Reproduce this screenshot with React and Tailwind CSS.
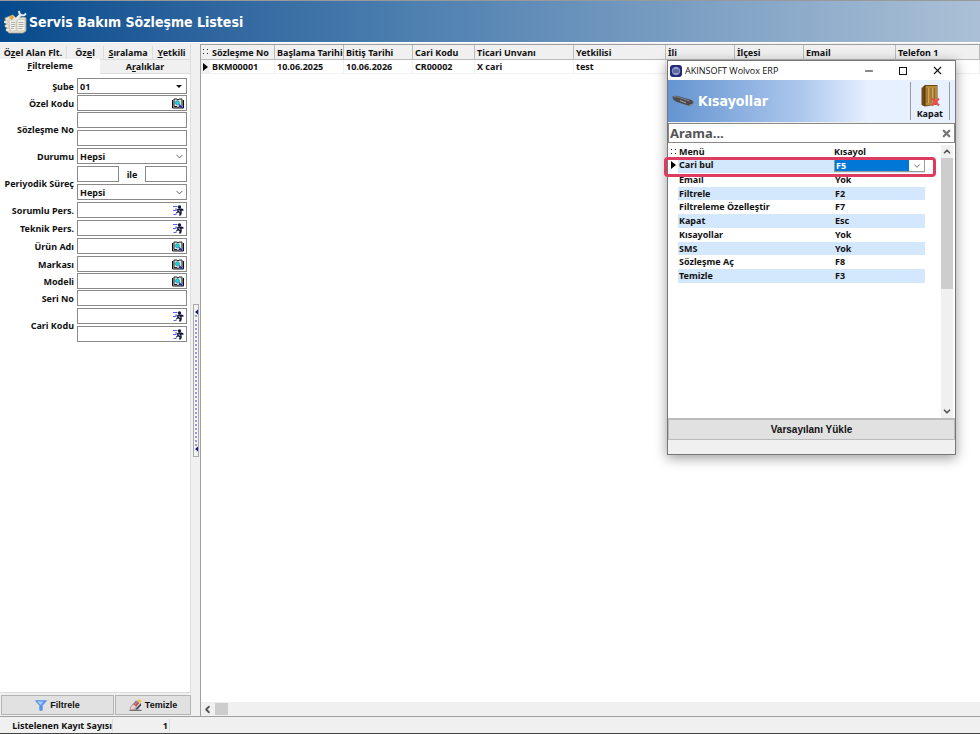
import { ChevronDown, ChevronLeft, ChevronUp, Minus, X } from 'lucide-react';

const columns = [
  { title: 'Sözleşme No', value: 'BKM00001', width: 'w-[65px]' },
  { title: 'Başlama Tarihi', value: '10.06.2025', width: 'w-[69px]' },
  { title: 'Bitiş Tarihi', value: '10.06.2026', width: 'w-[69px]' },
  { title: 'Cari Kodu', value: 'CR00002', width: 'w-[62px]' },
  { title: 'Ticari Unvanı', value: 'X cari', width: 'w-[99px]' },
  { title: 'Yetkilisi', value: 'test', width: 'w-[92px]' },
  { title: 'İli', value: '', width: 'w-[69px]' },
  { title: 'İlçesi', value: '', width: 'w-[69px]' },
  { title: 'Email', value: '', width: 'w-[92px]' },
  { title: 'Telefon 1', value: '', width: '' },
];

const shortcuts = [
  ['Cari bul', 'F5'],
  ['Email', 'Yok'],
  ['Filtrele', 'F2'],
  ['Filtreleme Özelleştir', 'F7'],
  ['Kapat', 'Esc'],
  ['Kısayollar', 'Yok'],
  ['SMS', 'Yok'],
  ['Sözleşme Aç', 'F8'],
  ['Temizle', 'F3'],
];

const BookIcon = () => (
  <svg viewBox="0 0 12 11" className="h-[11px] w-3">
    <path d="M0.5 2v8h11V2" fill="#c4c4c4" stroke="#111" />
    <path d="M2 1h3l1 1 1-1h3v7.500H7l-1 1-1-1H2z" fill="#dfe4e4" stroke="#222" />
    <circle cx="5.400" cy="4.800" r="2" fill="#19d8dc" stroke="#067f90" strokeWidth="0.6" />
    <path d="M7 6.500l3.500 3.500" stroke="#2430c8" strokeWidth="1.3" />
  </svg>
);

const RunnerIcon = () => (
  <svg viewBox="0 0 12 11" className="h-[11px] w-3">
    <path d="M1 1.500h4.500M3 4h2M1 5.500h3.500M1.500 9.500h3" stroke="#5a63f0" strokeWidth="1" />
    <circle cx="7.500" cy="2" r="1.700" fill="#14183a" />
    <path d="M4.500 4.500l2.500-1h3l1.500 1v1.200H9.500l0.300 2.300L9 10.500H7l0.500-2.500L6 7.500 4.500 8.500H3.500L5.500 6z" fill="#14183a" />
    <path d="M6.800 5l1.200 1.800" stroke="#e8e8ff" strokeWidth="0.9" />
  </svg>
);

const ContractIcon = () => (
  <svg viewBox="0 0 24 24" className="h-6 w-6">
    <path d="M1 8l8-3 3 3 8-1 2 1v13l-3 2H5l-2-2z" fill="#e8e4d8" stroke="#a79f8c" strokeWidth="0.8" />
    <path d="M5 10h7v11H6zM13 10l8-1v12h-8z" fill="#f4f2ea" stroke="#b6b0a0" strokeWidth="0.6" />
    <path d="M7 12.5h4M7 14.5h4M7 16.5h4M7 18.5h3M14.5 12.5h5M14.5 14.5h5M14.5 16.5h5M14.5 18.5h4" stroke="#9a9a9a" strokeWidth="0.8" />
    <path d="M0 11h4v2H0zM1 15h4v2H1zM2 19h4v2H2z" fill="#fff" stroke="#a79f8c" strokeWidth="0.5" />
    <path d="M10 11l7-6.500" stroke="#e2e9ef" strokeWidth="2.6" />
    <path d="M15 0.800l0.500 3 2 1.500 3-0.300 1.500-1.500" fill="none" stroke="#dfe9f2" strokeWidth="2" />
    <path d="M5 8l3-3 2 2-2 3z" fill="#e5a43a" />
  </svg>
);

const KnifeIcon = () => (
  <svg viewBox="0 0 22 12" className="h-3 w-[22px]">
    <path d="M0.500 1.500q3-1.500 7 0l12 3.500q2.500 1.500 1.500 4-2 2.500-5 1.500L5 7Q0.500 5 0.500 1.500z" fill="#4b4b4f" />
    <path d="M1.500 1.800q3-0.500 6 0.700l10 3.500" fill="none" stroke="#85858a" strokeWidth="1" />
    <path d="M8 5.500l6 2.300" stroke="#a5a5a9" strokeWidth="1" />
    <path d="M17 10.300l4-1.300" stroke="#a9876d" strokeWidth="1" />
  </svg>
);

const DoorIcon = () => (
  <svg viewBox="0 0 20 24" className="h-6 w-5">
    <path d="M1.500 4l3.500-3h12.500v19.500L5 22.500l-3.500-1.500z" fill="#6d4a12" />
    <path d="M5 2h12v18L5 21.500z" fill="#b5893c" />
    <path d="M7 4v15M11 4v14.500M14.500 4v14.500" stroke="#93692a" strokeWidth="1" />
    <path d="M8.500 4v15M12.500 4v14" stroke="#d3ab5e" strokeWidth="0.8" />
    <path d="M5 1.500v20.500" stroke="#4d330b" />
    <path d="M12 14.500l7 7M19 14.500l-7 7" stroke="#ee4a52" strokeWidth="2.200" />
  </svg>
);

const AppIcon = () => (
  <svg viewBox="0 0 12 12" className="h-3 w-3">
    <rect width="12" height="12" rx="3" fill="#202a78" />
    <circle cx="6" cy="6" r="3.800" fill="none" stroke="#b9c0ea" strokeWidth="0.800" />
    <path d="M3 5h6M3 7h6M4 3.600h4M4 8.600h4" stroke="#dfe3f8" strokeWidth="0.700" />
  </svg>
);

const FunnelIcon = () => (
  <svg viewBox="0 0 12 11" className="h-[11px] w-3">
    <path d="M0.500 0.700h11L7.200 5.500v4.800H4.800V5.500z" fill="#5b9bf3" stroke="#3f7fe0" strokeWidth="0.700" />
    <path d="M2.300 1.600h6L5.600 5z" fill="#a9cdfb" />
  </svg>
);

const EraserIcon = () => (
  <svg viewBox="0 0 13 12" className="h-3 w-[13px]">
    <path d="M0.500 11.300h12" stroke="#444" strokeWidth="0.9" />
    <path d="M1 9l3-4 3.500 2.500L5 10.800H2z" fill="#ecd0cc" stroke="#8a6a6a" strokeWidth="0.6" />
    <path d="M4 5l3-3.500L10.500 4l-3 3.500z" fill="#d8503f" />
    <path d="M5.500 5.500L9 2" stroke="#6ea0d8" strokeWidth="1.2" />
    <path d="M8.500 1.500l2-1.500 2 1.500-1 2.500z" fill="#f0c544" />
    <path d="M6 10.500L12 4v2.500l-3.500 4z" fill="#3d4652" />
  </svg>
);

const FieldRow = ({ label, htmlFor, children }) => (
  <div className="flex items-center gap-[3px]">
    <label htmlFor={htmlFor} className="w-[74px] shrink-0 text-right whitespace-nowrap">
      {label}
    </label>
    <div className="flex min-w-0 flex-1 flex-col gap-0.5">{children}</div>
  </div>
);

const TextField = ({ id, label, icon }) => (
  <div className="flex h-4 w-full min-w-0 items-center border border-[#8a8a8a] bg-white">
    <input id={id} aria-label={label} type="text" className="h-full w-full min-w-0 px-0.5 outline-none" />
    {icon && (
      <button type="button" aria-label="Seç" className="shrink-0 pr-0.5">
        {icon === 'book' ? <BookIcon /> : <RunnerIcon />}
      </button>
    )}
  </div>
);

const SelectField = ({ id, label, value, solid }) => (
  <div className="relative h-4 border border-[#8a8a8a] bg-white">
    <select id={id} aria-label={label} className="block h-full w-full appearance-none px-0.5 outline-none">
      <option>{value}</option>
    </select>
    {solid ? (
      <svg viewBox="0 0 6 3" className="pointer-events-none absolute top-1.5 right-1 h-[3px] w-1.5">
        <path d="M0 0h6L3 3z" fill="#111" />
      </svg>
    ) : (
      <ChevronDown className="pointer-events-none absolute top-0.5 right-px h-[11px] w-[11px]" strokeWidth={2} color="#555" />
    )}
  </div>
);

const Grip = () => (
  <div className="flex h-[153px] w-1.5 flex-col items-center justify-between border border-[#aaa] bg-[#f4f4f4] py-1">
    <svg viewBox="0 0 4 6" className="h-1.5 w-1">
      <path d="M4 0.500v5L1 3z" fill="#16168c" />
    </svg>
    <div className="w-0.5 flex-1 border-r-2 border-dotted border-[#9a9ad0]" />
    <svg viewBox="0 0 4 6" className="h-1.5 w-1">
      <path d="M4 0.500v5L1 3z" fill="#16168c" />
    </svg>
  </div>
);

const FilterPanel = () => (
  <aside className="flex w-[191px] shrink-0 flex-col">
    <div className="flex min-h-0 flex-1 flex-col border-r border-[#ddd] bg-white">
      <div role="tablist" className="bg-[#f0f0f0]">
        <div className="flex h-[15px] items-end">
          <button role="tab" type="button" className="w-[67px] border-r border-[#ddd] whitespace-nowrap">
            Ö<u>z</u>el Alan Flt.
          </button>
          <button role="tab" type="button" className="w-[37px] border-r border-[#ddd]">
            Öz<u>e</u>l
          </button>
          <button role="tab" type="button" className="w-[49px] border-r border-[#ddd]">
            <u>S</u>ıralama
          </button>
          <button role="tab" type="button" className="flex-1">
            <u>Y</u>etkili
          </button>
        </div>
        <div className="flex h-[15px]">
          <button role="tab" type="button" aria-selected="true" className="w-[100px] bg-white pb-0.5">
            <u>F</u>iltreleme
          </button>
          <button role="tab" type="button" className="flex-1 border-t border-b border-[#ddd]">
            A<u>r</u>alıklar
          </button>
        </div>
      </div>

      <div className="flex flex-col gap-0.5 pt-1 pr-[3px]">
        <div className="flex flex-col gap-px">
          <FieldRow label="Şube" htmlFor="sube">
            <SelectField id="sube" value="01" solid />
          </FieldRow>
          <FieldRow label="Özel Kodu" htmlFor="ozel-kodu">
            <TextField id="ozel-kodu" icon="book" />
          </FieldRow>
          <FieldRow label="Sözleşme No" htmlFor="sozlesme-no">
            <TextField id="sozlesme-no" />
            <TextField label="Sözleşme No (bitiş)" />
          </FieldRow>
        </div>
        <FieldRow label="Durumu" htmlFor="durumu">
          <SelectField id="durumu" value="Hepsi" />
        </FieldRow>
        <FieldRow label="Periyodik Süreç" htmlFor="periyodik">
          <div className="flex items-center">
            <TextField id="periyodik" />
            <span className="w-[26px] shrink-0 text-center">ile</span>
            <TextField label="Periyodik Süreç (bitiş)" />
          </div>
          <SelectField label="Periyodik Süreç türü" value="Hepsi" />
        </FieldRow>
        <FieldRow label="Sorumlu Pers." htmlFor="sorumlu">
          <TextField id="sorumlu" icon="runner" />
        </FieldRow>
        <FieldRow label="Teknik Pers." htmlFor="teknik">
          <TextField id="teknik" icon="runner" />
        </FieldRow>
        <FieldRow label="Ürün Adı" htmlFor="urun">
          <TextField id="urun" icon="book" />
        </FieldRow>
        <div className="flex flex-col gap-px">
          <FieldRow label="Markası" htmlFor="marka">
            <TextField id="marka" icon="book" />
          </FieldRow>
          <FieldRow label="Modeli" htmlFor="model">
            <TextField id="model" icon="book" />
          </FieldRow>
          <FieldRow label="Seri No" htmlFor="seri">
            <TextField id="seri" />
          </FieldRow>
        </div>
        <FieldRow label="Cari Kodu" htmlFor="cari">
          <TextField id="cari" icon="runner" />
          <TextField label="Cari Kodu (bitiş)" icon="runner" />
        </FieldRow>
      </div>
    </div>

    <div className="flex h-6 gap-px border-t border-[#ddd] pt-0.5 pb-px pl-px font-['Liberation_Sans',sans-serif]">
      <button type="button" className="flex flex-[3] items-center justify-center gap-[3px] border border-[#b4b4b4] bg-[#e1e1e1]">
        <FunnelIcon />
        Filtrele
      </button>
      <button type="button" className="flex flex-[2] items-center justify-center gap-[3px] border border-[#b4b4b4] bg-[#e1e1e1]">
        <EraserIcon />
        Temizle
      </button>
    </div>
  </aside>
);

const ContractGrid = () => (
  <main className="flex min-w-0 flex-1 flex-col border-t border-l border-[#a0a0a0] bg-white">
    <div className="min-h-0 flex-1 overflow-hidden">
      <table className="w-full table-fixed border-separate border-spacing-0 text-left leading-[13px]">
        <thead>
          <tr className="h-[15px] bg-[#f0f0f0]">
            <th className="w-[9px] border-b border-[#bbb] p-0 text-center">
              <svg viewBox="0 0 5 6" className="mx-auto h-1.5 w-[5px]">
                <path d="M0 0h1v1H0zM4 0h1v1H4zM0 4h1v1H0zM4 4h1v1H4z" fill="#222" />
              </svg>
            </th>
            {columns.map((col) => (
              <th
                key={col.title}
                className={`${col.width} overflow-hidden border-r border-b border-[#bbb] p-0 pl-0.5 font-bold whitespace-nowrap`}
              >
                {col.title}
              </th>
            ))}
          </tr>
        </thead>
        <tbody>
          <tr className="h-[14px]">
            <td className="bg-[#f0f0f0] p-0">
              <svg viewBox="0 0 5 8" className="mx-auto h-2 w-[5px]">
                <path d="M0 0l5 4-5 4z" />
              </svg>
            </td>
            {columns.map((col) => (
              <td key={col.title} className="border-r border-b border-[#f0f0f0] p-0 pl-0.5 whitespace-nowrap">
                {col.value}
              </td>
            ))}
          </tr>
        </tbody>
      </table>
    </div>
    <div className="flex h-[14px] shrink-0 items-center gap-0.5 bg-[#f0f0f0] pl-px">
      <ChevronLeft className="h-[11px] w-[11px]" strokeWidth={4} color="#555" />
      <div className="h-3 w-[13px] bg-[#cdcdcd]" />
    </div>
  </main>
);

const ShortcutDialog = () => (
  <section
    role="dialog"
    aria-label="Kısayollar"
    className="absolute top-[60px] left-[667px] flex h-[395px] w-[289px] flex-col border border-[#777] bg-[#f0f0f0] shadow-[0_3px_12px_rgba(0,0,0,0.4)]"
  >
    <div className="flex h-[19px] shrink-0 items-center bg-white pl-0.5 font-['Open_Sans',sans-serif] font-normal">
      <AppIcon />
      <span className="flex-1 pl-[3px]">AKINSOFT Wolvox ERP</span>
      <div className="flex items-center pr-px">
        <button type="button" aria-label="Küçült" className="flex w-[34px] justify-center">
          <Minus className="h-3 w-3" />
        </button>
        <button type="button" aria-label="Büyüt" className="flex w-[34px] justify-center">
          <span className="h-2 w-2 border border-[#111]" />
        </button>
        <button type="button" aria-label="Pencereyi kapat" className="flex w-[34px] justify-center">
          <X className="h-[13px] w-[13px]" />
        </button>
      </div>
    </div>

    <header className="flex h-[42px] shrink-0 items-center bg-linear-to-r from-[#6594d0] via-[#a9c5ec] via-45% to-[#e6f0ff] to-70% pl-1">
      <KnifeIcon />
      <h2 className="flex-1 pl-1 font-['DejaVu_Sans_Condensed','DejaVu_Sans',sans-serif] text-sm text-white">Kısayollar</h2>
      <div className="mr-[5px] flex h-[38px] items-center border-x border-[#999] px-1">
        <button type="button" className="flex flex-col items-center px-0.5 leading-[11px]">
          <DoorIcon />
          Kapat
        </button>
      </div>
    </header>

    <div className="mt-px flex h-5 shrink-0 items-center border border-[#888] bg-white pr-0.5">
      <input
        type="text"
        aria-label="Arama"
        placeholder="Arama..."
        className="min-w-0 flex-1 pl-px text-[13px] outline-none placeholder:text-[#555]"
      />
      <button type="button" aria-label="Temizle">
        <X className="h-[11px] w-[11px]" strokeWidth={5} color="#777" />
      </button>
    </div>

    <div className="flex min-h-0 flex-1 bg-white pt-0.5">
      <div className="min-w-0 flex-1 pt-px">
        <table className="h-[137px] w-[257px] table-fixed border-collapse text-left leading-[12px]">
          <thead>
            <tr>
              <th className="w-2.5 p-0">
                <svg viewBox="0 0 5 6" className="mx-auto h-1.5 w-[5px]">
                  <path d="M0 0h1v1H0zM4 0h1v1H4zM0 4h1v1H0zM4 4h1v1H4z" fill="#222" />
                </svg>
              </th>
              <th className="p-0 pl-px font-bold">Menü</th>
              <th className="w-[91px] p-0 font-bold">Kısayol</th>
            </tr>
          </thead>
          <tbody>
            {shortcuts.map(([name, key], index) => (
              <tr key={name} className="odd:bg-[#d4e8fd]">
                <td className="bg-white p-0">
                  {index === 0 && (
                    <svg viewBox="0 0 5 8" className="mx-auto h-2 w-[5px]">
                      <path d="M0 0l5 4-5 4z" />
                    </svg>
                  )}
                </td>
                <td className="p-0 pl-px">{name}</td>
                <td className="p-0">
                  {index === 0 ? (
                    <div className="relative h-[13px] border border-[#999] bg-white">
                      <select
                        aria-label="Kısayol"
                        className="block h-full w-[74px] appearance-none bg-[#0078d7] pl-px leading-[11px] text-white outline-none"
                      >
                        <option>{key}</option>
                      </select>
                      <ChevronDown className="pointer-events-none absolute top-px right-0.5 h-2.5 w-2.5" color="#555" />
                    </div>
                  ) : (
                    <span className="pl-px">{key}</span>
                  )}
                </td>
              </tr>
            ))}
          </tbody>
        </table>
      </div>
      <div className="mr-0.5 flex w-3 flex-col items-center bg-[#f0f0f0]">
        <ChevronUp className="h-[13px] w-2.5" strokeWidth={4} color="#555" />
        <div className="h-[131px] w-full bg-[#cdcdcd]" />
        <ChevronDown className="mt-auto h-[13px] w-2.5" strokeWidth={4} color="#555" />
      </div>
    </div>

    <button
      type="button"
      className="h-[22px] shrink-0 border border-t-2 border-[#bbb] bg-[#e1e1e1] font-['Liberation_Sans',sans-serif] text-[10px]"
    >
      Varsayılanı Yükle
    </button>
    <div className="h-[14px] shrink-0" />

    <div className="pointer-events-none absolute top-24 -left-1 h-5 w-[272px] rounded-[4px] border-3 border-[#dd3c60]" />
  </section>
);

const App = () => {
  return (
    <div className="relative flex h-screen flex-col overflow-hidden bg-[#f0f0f0] font-['Noto_Sans',sans-serif] text-[9px] leading-[13px] font-bold text-[#111]">
      <header className="flex h-[42px] shrink-0 items-center gap-px border-t border-[#999] bg-linear-to-r from-[#044a8c] via-[#4a7dae] via-40% to-[#abc0d6] pl-1">
        <ContractIcon />
        <h1 className="font-['DejaVu_Sans_Condensed','DejaVu_Sans',sans-serif] text-sm text-white">Servis Bakım Sözleşme Listesi</h1>
      </header>

      <div className="flex min-h-0 flex-1 border-t border-white pt-px">
        <FilterPanel />
        <div className="flex w-[9px] shrink-0 flex-col items-center pt-[260px]">
          <Grip />
        </div>
        <ContractGrid />
      </div>

      <footer className="flex h-[18px] shrink-0 items-center border-t border-b border-t-[#a0a0a0] border-b-[#444]">
        <span className="w-[113px] border-r border-[#ddd] text-right">Listelenen Kayıt Sayısı</span>
        <span className="w-[57px] border-r border-[#ddd] pr-px text-right">1</span>
      </footer>

      <ShortcutDialog />
    </div>
  );
};

export default App;
